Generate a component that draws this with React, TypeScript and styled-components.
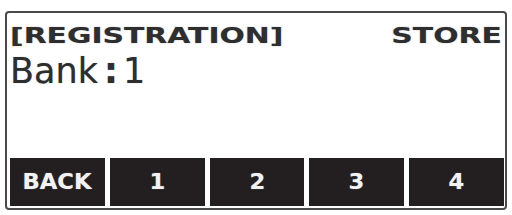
import React from "react";
import styled, { createGlobalStyle } from "styled-components";

const Global = createGlobalStyle`
  html, body { margin: 0; padding: 0; background: #ffffff; }
  body { width: 512px; height: 215px; overflow: hidden; font-family: "DejaVu Sans", sans-serif; }
`;

const Page = styled.div`
  width: 512px;
  height: 215px;
  padding: 11px 5px 0 5px;
  box-sizing: border-box;
`;

const Screen = styled.div`
  width: 502px;
  height: 199px;
  box-sizing: border-box;
  border: 2px solid #4a4a4a;
  border-radius: 4px;
  display: flex;
  flex-direction: column;
  color: #2e2e2e;
`;

const Header = styled.div`
  display: flex;
  justify-content: space-between;
  margin-top: 13px;
  padding: 0 3px 0 3px;
  height: 20px;
`;

const Wide = styled.span<{ $origin: "left" | "right" }>`
  display: inline-block;
  font-size: 21px;
  line-height: 20px;
  font-weight: bold;
  transform: scaleX(1.42);
  transform-origin: ${(p) => p.$origin} center;
  white-space: nowrap;
  text-shadow: 0 0 1px rgba(40, 40, 40, 0.5);
`;

const Value = styled.div`
  margin-top: 7px;
  padding-left: 3px;
  font-size: 35px;
  line-height: 36px;
  white-space: nowrap;
  text-shadow: 0 0 1px rgba(40, 40, 40, 0.5);
`;

const Colon = styled.span`
  font-weight: bold;
  margin: 0 5px 0 6px;
`;

const Buttons = styled.div`
  margin-top: auto;
  display: grid;
  grid-template-columns: repeat(5, 1fr);
  gap: 5px;
  padding: 0 1px 2px 3px;
`;

const Key = styled.div`
  height: 48px;
  background: #231f20;
  color: #f2f2f2;
  display: flex;
  align-items: center;
  justify-content: center;
  font-size: 21px;
  font-weight: bold;
  text-shadow: 0 0 1px rgba(255, 255, 255, 0.5);
`;

const KeyLabel = styled.span`
  display: inline-block;
  transform: scaleX(1.08);
`;

export default function App() {
  const keys = ["BACK", "1", "2", "3", "4"];
  return (
    <Page>
      <Global />
      <Screen>
        <Header>
          <Wide $origin="left">[REGISTRATION]</Wide>
          <Wide $origin="right">STORE</Wide>
        </Header>
        <Value>
          Bank<Colon>:</Colon>1
        </Value>
        <Buttons>
          {keys.map((k) => (
            <Key key={k}>
              <KeyLabel>{k}</KeyLabel>
            </Key>
          ))}
        </Buttons>
      </Screen>
    </Page>
  );
}
